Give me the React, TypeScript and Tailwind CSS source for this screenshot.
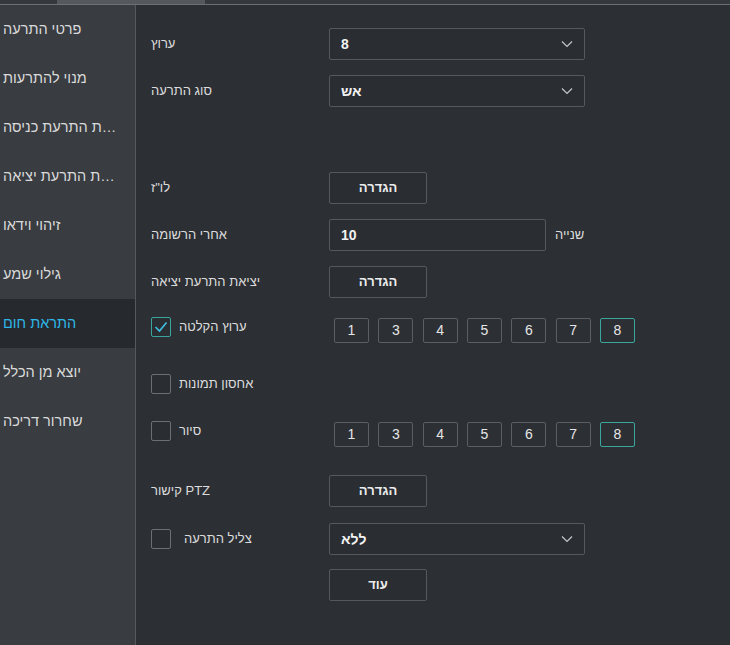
import React from 'react';

const menu = [
  'פרטי התרעה',
  'מנוי להתרעות',
  'הגדרת התרעת כניסה',
  'הגדרת התרעת יציאה',
  'זיהוי וידאו',
  'גילוי שמע',
  'התראת חום',
  'יוצא מן הכלל',
  'שחרור דריכה',
];

const channels = ['1', '3', '4', '5', '6', '7', '8'];

const Chevron = () => (
  <svg width="12" height="8" viewBox="0 0 12 8" className="mr-[5px]">
    <path d="M1 1.5 L6 6.5 L11 1.5" fill="none" stroke="#c4c6c9" strokeWidth="1.2" />
  </svg>
);

const Select: React.FC<{ value: string }> = ({ value }) => (
  <div className="w-[256px] h-[32px] border border-[#55585d] rounded-[2px] bg-[#2a2d32] flex items-center justify-between pl-[11px] pr-[6px]">
    <span className="text-[14px] font-bold text-[#f2f2f2]">{value}</span>
    <Chevron />
  </div>
);

const Btn: React.FC<{ label: string }> = ({ label }) => (
  <div className="w-[98px] h-[32px] border border-[#55585d] rounded-[2px] bg-[#2a2d32] flex items-center justify-center">
    <span className="text-[13px] font-bold text-[#ececec]">{label}</span>
  </div>
);

const Label: React.FC<{ text: string }> = ({ text }) => (
  <div className="w-[178px] flex">
    <span className="text-[13px] text-[#dcdcdc]">{text}</span>
  </div>
);

const Check: React.FC<{ checked?: boolean }> = ({ checked }) => (
  <div
    className={`w-[20px] h-[20px] rounded-[2px] border flex items-center justify-center bg-[#2a2d32] ${
      checked ? 'border-[#3aa59c]' : 'border-[#6b6e72]'
    }`}
  >
    {checked && (
      <svg width="14" height="12" viewBox="0 0 14 12">
        <path d="M1.5 6 L5.5 10 L12.5 1.5" fill="none" stroke="#3fc3e4" strokeWidth="1.6" />
      </svg>
    )}
  </div>
);

const Channels = () => (
  <div className="flex gap-[9.33px] mt-[1px]">
    {channels.map((c) => (
      <div
        key={c}
        className={`w-[35px] h-[25px] border rounded-[2px] flex items-center justify-center text-[14px] text-[#e6e6e6] ${
          c === '8' ? 'border-[#3aa59c]' : 'border-[#5b5e63]'
        }`}
      >
        {c}
      </div>
    ))}
  </div>
);

const App: React.FC = () => {
  return (
    <div className="w-[730px] h-[645px] flex flex-col bg-[#2c2f34] overflow-hidden" style={{ fontFamily: '"Liberation Sans", Arial, sans-serif' }}>
      {/* top strip */}
      <div className="h-[4px] bg-[#35383d] flex">
        <div className="ml-[57px] w-[148px] bg-[#55585c]" />
      </div>
      <div className="h-[1px] bg-[#6c6f73]" />

      <div className="flex flex-1">
        {/* sidebar */}
        <aside className="w-[136px] bg-[#393c41] border-r border-[#55585c] flex flex-col">
          {menu.map((m, i) => (
            <div
              key={m}
              className={`h-[49px] flex items-center pl-[3px] pr-[17px] ${i === 6 ? 'bg-[#26292d]' : ''}`}
            >
              <div className={`w-full text-left truncate text-[14.5px] ${i === 6 ? 'text-[#2eb6e8]' : 'text-[#dadada]'}`}>
                {m}
              </div>
            </div>
          ))}
        </aside>

        {/* main */}
        <main className="flex-1 pl-[15px] flex flex-col">
          <div className="flex items-center mt-[23px]">
            <Label text="ערוץ" />
            <Select value="8" />
          </div>
          <div className="flex items-center mt-[15px]">
            <Label text="סוג התרעה" />
            <Select value="אש" />
          </div>
          <div className="flex items-center mt-[65px]">
            <Label text='לו"ז' />
            <Btn label="הגדרה" />
          </div>
          <div className="flex items-center mt-[15px]">
            <Label text="אחרי הרשומה" />
            <div className="w-[217px] h-[32px] border border-[#55585d] rounded-[2px] bg-[#2a2d32] flex items-center pl-[11px]">
              <span className="text-[14px] font-bold text-[#f2f2f2]">10</span>
            </div>
            <span className="ml-[9px] text-[13px] text-[#dcdcdc]">שנייה</span>
          </div>
          <div className="flex items-center mt-[15px]">
            <Label text="יציאת התרעת יציאה" />
            <Btn label="הגדרה" />
          </div>

          <div className="flex items-start mt-[19px]">
            <div className="w-[183px] flex items-center gap-[8px]">
              <Check checked />
              <span className="text-[13px] text-[#dcdcdc]">ערוץ הקלטה</span>
            </div>
            <Channels />
          </div>

          <div className="flex items-center mt-[31px]">
            <div className="w-[183px] flex items-center gap-[8px]">
              <Check />
              <span className="text-[13px] text-[#dcdcdc]">אחסון תמונות</span>
            </div>
          </div>

          <div className="flex items-start mt-[27px]">
            <div className="w-[183px] flex items-center gap-[8px]">
              <Check />
              <span className="text-[13px] text-[#dcdcdc]">סיור</span>
            </div>
            <Channels />
          </div>

          <div className="flex items-center mt-[28px]">
            <Label text="קישור PTZ" />
            <Btn label="הגדרה" />
          </div>

          <div className="flex items-center mt-[16px]">
            <div className="w-[178px] flex items-center gap-[13px]">
              <Check />
              <span className="text-[13px] text-[#dcdcdc]">צליל התרעה</span>
            </div>
            <Select value="ללא" />
          </div>

          <div className="flex items-center mt-[14px]">
            <div className="w-[178px]" />
            <Btn label="עוד" />
          </div>
        </main>
      </div>
    </div>
  );
};

export default App;
